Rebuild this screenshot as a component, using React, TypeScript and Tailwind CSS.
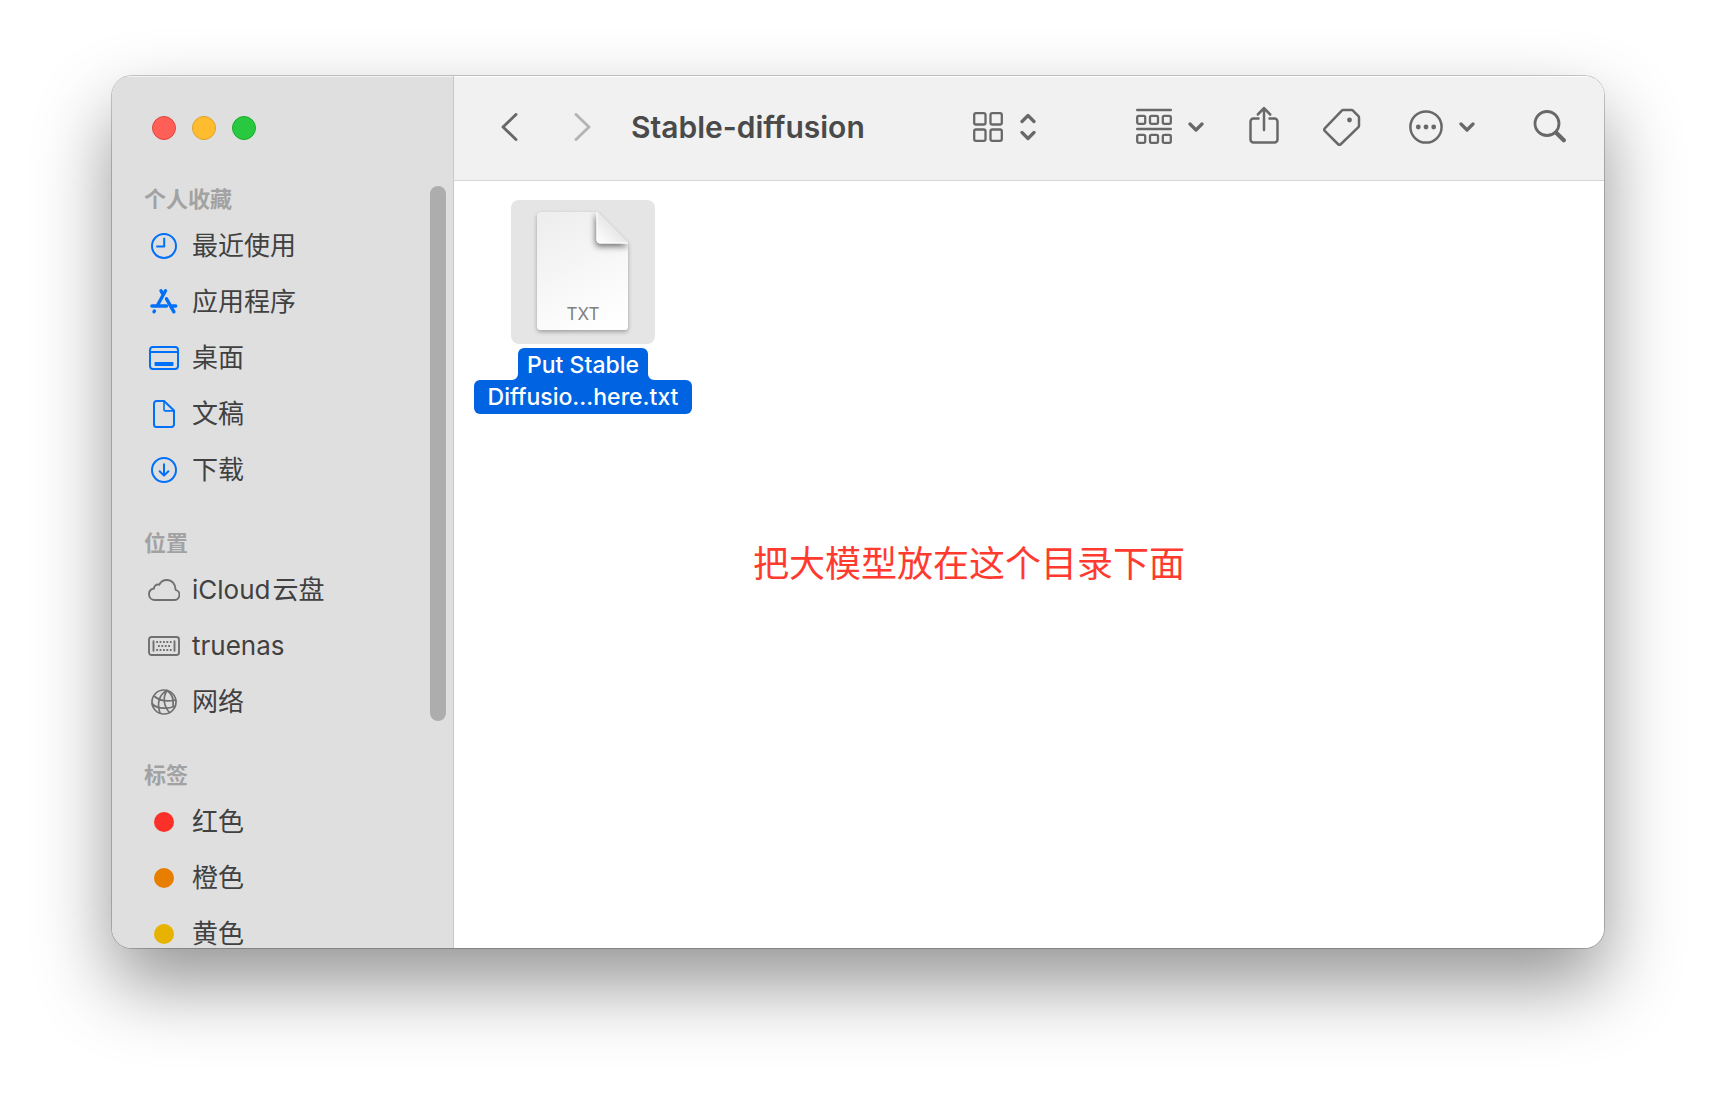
import type { ReactNode } from "react";

const stroke = {
  fill: "none",
  stroke: "currentColor",
  strokeLinecap: "round" as const,
  strokeLinejoin: "round" as const,
};

function ClockIcon() {
  return (
    <svg width="26" height="26" viewBox="0 0 26 26" strokeWidth="2" {...stroke}>
      <circle cx="13" cy="13" r="12" />
      <path d="M13.2 5.5v8H6" />
    </svg>
  );
}

function AppsIcon() {
  return (
    <svg width="28" height="28" viewBox="0 0 28 28" strokeWidth="3.4" {...stroke}>
      <path d="M15.500 2.800 7.400 17.500M11 2.800l2.200 4M16.500 10.800l7.400 13M1.900 18h14.600M21.300 18h4.400" />
      <path d="M4.400 23 4 23.800" />
    </svg>
  );
}

function DesktopIcon() {
  return (
    <svg width="30" height="24" viewBox="0 0 30 24" strokeWidth="2" {...stroke}>
      <rect x="1" y="1" width="28" height="22" rx="3" />
      <path d="M1.5 6h27" />
      <rect x="5.5" y="16" width="19" height="4" rx="1" fill="currentColor" stroke="none" />
    </svg>
  );
}

function DocumentIcon() {
  return (
    <svg width="22" height="28" viewBox="0 0 22 28" strokeWidth="2" {...stroke}>
      <path d="M3.500 1H11l10 9.500V24.500a2.500 2.500 0 0 1-2.500 2.500h-15A2.500 2.500 0 0 1 1 24.500v-21A2.500 2.500 0 0 1 3.500 1Z" />
      <path d="M11 1.500v8.200a1.200 1.200 0 0 0 1.200 1.200h8.400" strokeWidth="1.600" />
    </svg>
  );
}

function DownloadIcon() {
  return (
    <svg width="26" height="26" viewBox="0 0 26 26" strokeWidth="2" {...stroke}>
      <circle cx="13" cy="13" r="12" />
      <path d="M13 7.200v11M8.600 14.200l4.400 4.400 4.400-4.400" />
    </svg>
  );
}

function CloudIcon() {
  return (
    <svg width="32" height="22" viewBox="0 0 32 22" strokeWidth="1.900" {...stroke}>
      <path d="M6.800 21h19a5.200 5.200 0 0 0 1.800-10.200C27.600 5 23.800 1 18.800 1c-3.400 0-6 1.700-7.600 4.700-2.600-.8-5.200 1-5.200 3.800C3 10 1 12.300 1 15.200 1 18.500 3.500 21 6.800 21Z" />
    </svg>
  );
}

function ServerIcon() {
  return (
    <svg width="32" height="20" viewBox="0 0 32 20" strokeWidth="1.900" {...stroke}>
      <rect x="1" y="1" width="30" height="18" rx="2.500" />
      <path d="M5.500 5.200v9.600M26.500 5.200v9.600" />
      <g strokeLinecap="butt" strokeWidth="1.800">
        <path d="M8.200 6h16" strokeDasharray="1.800 1.600" />
        <path d="M10 10h12.500" strokeDasharray="1.800 1.600" />
        <path d="M8.200 14h16" strokeDasharray="1.800 1.600" />
      </g>
    </svg>
  );
}

function GlobeIcon() {
  return (
    <svg width="26" height="26" viewBox="0 0 26 26" strokeWidth="1.700" {...stroke}>
      <circle cx="13" cy="13" r="12" />
      <path d="M16 1.500C8.500 5 5.500 14 9 24M16 1.500C11.500 8 12.500 17 18.500 23.600M16 1.500c4.500 3 7 9 6 15.500" />
      <path d="M3 7c5 4.500 13 6 21.500 4M1.200 14.500c2 4 13 6.500 22.300 3" />
    </svg>
  );
}

function BackIcon({ flip = false }: { flip?: boolean }) {
  return (
    <svg width="17" height="28" viewBox="0 0 17 28" strokeWidth="2.900" {...stroke}>
      <path d={flip ? "M2 1.500 15 14 2 26.500" : "M15 1.500 2 14l13 12.500"} />
    </svg>
  );
}

function GridIcon() {
  return (
    <svg width="30" height="30" viewBox="0 0 30 30" strokeWidth="2.300" {...stroke}>
      <rect x="1.200" y="1.200" width="11.300" height="11.300" rx="1.800" />
      <rect x="17.500" y="1.200" width="11.300" height="11.300" rx="1.800" />
      <rect x="1.200" y="17.500" width="11.300" height="11.300" rx="1.800" />
      <rect x="17.500" y="17.500" width="11.300" height="11.300" rx="1.800" />
    </svg>
  );
}

function UpDownIcon() {
  return (
    <svg width="16" height="28" viewBox="0 0 16 28" strokeWidth="3.200" {...stroke}>
      <path d="M2 8.500 8 2.500l6 6M2 19.500l6 6 6-6" />
    </svg>
  );
}

function ChevronDownIcon() {
  return (
    <svg width="16" height="10" viewBox="0 0 16 10" strokeWidth="3.200" {...stroke}>
      <path d="m2 2 6 6 6-6" />
    </svg>
  );
}

function GroupIcon() {
  return (
    <svg width="36" height="38" viewBox="0 0 36 38" strokeWidth="2.300" {...stroke}>
      <path d="M1.200 2h33.600M1.200 21h33.600" strokeWidth="2.400" />
      {[1.2, 14, 26.8].map((x) => (
        <g key={x}>
          <rect x={x} y="7.800" width="8" height="8" rx="1.500" />
          <rect x={x} y="26.800" width="8" height="8" rx="1.500" />
        </g>
      ))}
    </svg>
  );
}

function ShareIcon() {
  return (
    <svg width="30" height="42" viewBox="0 0 30 42" strokeWidth="2.500" {...stroke}>
      <path d="M9.500 12.500H4.500a3 3 0 0 0-3 3v18a3 3 0 0 0 3 3h21a3 3 0 0 0 3-3v-18a3 3 0 0 0-3-3h-5" />
      <path d="M15 24V2.500M8.800 8.500 15 2.200l6.200 6.300" />
    </svg>
  );
}

function TagIcon() {
  return (
    <svg width="38" height="38" viewBox="0 0 38 38" strokeWidth="2.500" {...stroke}>
      <path d="M20.200 2h8.300a2 2 0 0 1 1.500.6l5.400 5.500a2 2 0 0 1 .6 1.400v8.200a2 2 0 0 1-.6 1.400L18 36a2.200 2.200 0 0 1-3.100 0L2 23.200a2.200 2.200 0 0 1 0-3.100L18.800 2.600a2 2 0 0 1 1.400-.6Z" />
      <circle cx="26.500" cy="12" r="2.400" fill="currentColor" stroke="none" />
    </svg>
  );
}

function MoreIcon() {
  return (
    <svg width="34" height="34" viewBox="0 0 34 34" strokeWidth="2.500" {...stroke}>
      <circle cx="17" cy="17" r="15.600" />
      <g fill="currentColor" stroke="none">
        <circle cx="9.300" cy="17" r="2.400" />
        <circle cx="17" cy="17" r="2.400" />
        <circle cx="24.700" cy="17" r="2.400" />
      </g>
    </svg>
  );
}

function SearchIcon() {
  return (
    <svg width="33" height="34" viewBox="0 0 33 34" {...stroke}>
      <circle cx="14" cy="13.500" r="12" strokeWidth="2.800" />
      <path d="m23.200 22.700 7.600 7.600" strokeWidth="4.200" />
    </svg>
  );
}

function TextFileIcon() {
  return (
    <svg width="104" height="132" viewBox="0 0 104 132" className="drop-shadow-[0_2px_2px_rgba(0,0,0,0.3)]">
      <defs>
        <linearGradient id="sheet" x1="0" y1="0" x2="0.400" y2="1">
          <stop offset="0" stopColor="#ececec" />
          <stop offset="1" stopColor="#fefefe" />
        </linearGradient>
        <linearGradient id="fold" x1="0" y1="1" x2="0.550" y2="0.450">
          <stop offset="0" stopColor="#ffffff" />
          <stop offset="1" stopColor="#e6e6e6" />
        </linearGradient>
        <filter id="foldShadow" x="-50%" y="-50%" width="200%" height="200%">
          <feDropShadow dx="-1" dy="3" stdDeviation="3" floodColor="#000" floodOpacity="0.550" />
        </filter>
        <clipPath id="sheetClip">
          <path d="M9.500 6H66L97 37v83.500a3.500 3.500 0 0 1-3.500 3.500h-84A3.500 3.500 0 0 1 6 120.500v-111A3.500 3.500 0 0 1 9.500 6Z" />
        </clipPath>
      </defs>
      <g clipPath="url(#sheetClip)">
        <rect width="104" height="132" fill="url(#sheet)" />
        <path
          d="M66 6v28a3 3 0 0 0 3 3h29Z"
          fill="url(#fold)"
          stroke="#fff"
          strokeWidth="1"
          filter="url(#foldShadow)"
        />
      </g>
    </svg>
  );
}

function Fillet({ flip = false }: { flip?: boolean }) {
  return (
    <svg width="6" height="6" viewBox="0 0 6 6" className="self-end text-[#0063e1]">
      <path d={flip ? "M0 0v6h6a6 6 0 0 1-6-6Z" : "M6 0v6H0a6 6 0 0 0 6-6Z"} fill="currentColor" />
    </svg>
  );
}

type Item = { icon: ReactNode; label: ReactNode; tint: string };

function Dot({ color }: { color: string }) {
  return <span className={`size-5 rounded-full ${color}`} />;
}

const sections: { title: string; items: Item[] }[] = [
  {
    title: "个人收藏",
    items: [
      { icon: <ClockIcon />, label: "最近使用", tint: "text-[#0070f8]" },
      { icon: <AppsIcon />, label: "应用程序", tint: "text-[#0070f8]" },
      { icon: <DesktopIcon />, label: "桌面", tint: "text-[#0070f8]" },
      { icon: <DocumentIcon />, label: "文稿", tint: "text-[#0070f8]" },
      { icon: <DownloadIcon />, label: "下载", tint: "text-[#0070f8]" },
    ],
  },
  {
    title: "位置",
    items: [
      {
        icon: <CloudIcon />,
        label: (
          <>
            iCloud<span className="ml-0.5">云盘</span>
          </>
        ),
        tint: "text-[#707070]",
      },
      { icon: <ServerIcon />, label: "truenas", tint: "text-[#707070]" },
      { icon: <GlobeIcon />, label: "网络", tint: "text-[#707070]" },
    ],
  },
  {
    title: "标签",
    items: [
      { icon: <Dot color="bg-[#fb3129]" />, label: "红色", tint: "" },
      { icon: <Dot color="bg-[#e87e00]" />, label: "橙色", tint: "" },
      { icon: <Dot color="bg-[#e8b300]" />, label: "黄色", tint: "" },
    ],
  },
];

function Sidebar() {
  return (
    <aside className="flex w-[342px] shrink-0 flex-col border-r border-[#c8c8c8] bg-[#dfdfdf] shadow-[inset_0_1px_0_rgba(255,255,255,0.6)]">
      <div className="flex h-[104px] shrink-0 items-center gap-4 pl-10">
        <button aria-label="关闭" className="size-6 rounded-full border border-[#e2463f] bg-[#ff5f57]" />
        <button aria-label="最小化" className="size-6 rounded-full border border-[#e0a028] bg-[#febc2e]" />
        <button aria-label="缩放" className="size-6 rounded-full border border-[#1bac2c] bg-[#28c840]" />
      </div>
      <div className="flex min-h-0 flex-1">
        <nav className="flex min-w-0 flex-1 flex-col gap-[26px] overflow-hidden">
          {sections.map((section) => (
            <section key={section.title}>
              <h2 className="flex h-[38px] items-center pl-8 text-[22px] leading-8 font-bold text-[#a2a2a2]">
                {section.title}
              </h2>
              <ul>
                {section.items.map((item, i) => (
                  <li key={i}>
                    <a href="#" className="flex h-14 items-center gap-3 pl-9 text-[26px] leading-[26px] text-[#414141]">
                      <span className={`flex w-8 justify-center ${item.tint}`}>{item.icon}</span>
                      <span>{item.label}</span>
                    </a>
                  </li>
                ))}
              </ul>
            </section>
          ))}
        </nav>
        <div className="mt-1.5 mr-[7px] h-[535px] w-4 shrink-0 rounded-full bg-[#adadad]" />
      </div>
    </aside>
  );
}

function Toolbar() {
  return (
    <header className="flex h-[105px] shrink-0 items-center border-b border-[#d6d6d6] bg-[#f1f1f1] pr-[38px] pb-0.5 pl-[47px] text-[#686868] shadow-[inset_0_1px_0_rgba(255,255,255,0.9)]">
      <button aria-label="后退">
        <BackIcon />
      </button>
      <button aria-label="前进" disabled className="ml-14 text-[#b4b4b4]">
        <BackIcon flip />
      </button>
      <h1 className="ml-10 min-w-0 flex-1 truncate text-[30px] leading-10 font-semibold text-[#4a4a4a]">
        Stable-diffusion
      </h1>
      <button aria-label="显示方式" className="flex items-center gap-[17px]">
        <GridIcon />
        <UpDownIcon />
      </button>
      <button aria-label="群组" className="ml-[100px] flex items-center gap-4">
        <GroupIcon />
        <ChevronDownIcon />
      </button>
      <button aria-label="共享" className="ml-[45px]">
        <ShareIcon />
      </button>
      <button aria-label="标签" className="ml-11">
        <TagIcon />
      </button>
      <button aria-label="更多" className="ml-12 flex items-center gap-4">
        <MoreIcon />
        <ChevronDownIcon />
      </button>
      <button aria-label="搜索" className="ml-[58px]">
        <SearchIcon />
      </button>
    </header>
  );
}

function FileItem() {
  return (
    <button className="flex w-[218px] flex-col items-center text-[23px] leading-[34px] font-medium text-white">
      <span className="relative flex size-36 items-center justify-center rounded-lg bg-[#e5e5e5]">
        <TextFileIcon />
        <span className="absolute inset-x-0 bottom-5 text-center text-[17px] leading-5 font-normal text-[#808080]">
          TXT
        </span>
      </span>
      <span className="mt-1 flex">
        <Fillet />
        <span className="h-8 w-[130px] rounded-t-md bg-[#0063e1]">Put Stable</span>
        <Fillet flip />
      </span>
      <span className="h-[34px] w-full rounded-md bg-[#0063e1]">Diffusio...here.txt</span>
    </button>
  );
}

export default function App() {
  return (
    <div className="flex h-screen bg-white px-28 pt-[76px] pb-[148px] font-['Inter','Noto_Sans_CJK_SC',sans-serif]">
      <div className="flex min-w-0 flex-1 overflow-hidden rounded-[20px] shadow-[0_0_0_1px_rgba(0,0,0,0.2),0_36px_76px_rgba(0,0,0,0.42)]">
        <Sidebar />
        <main className="flex min-w-0 flex-1 flex-col bg-white">
          <Toolbar />
          <div className="pt-[19px] pl-5">
            <FileItem />
            <p className="mt-[126px] ml-[279px] text-[36px] leading-12 font-normal text-[#ff3b30]">
              把大模型放在这个目录下面
            </p>
          </div>
        </main>
      </div>
    </div>
  );
}
